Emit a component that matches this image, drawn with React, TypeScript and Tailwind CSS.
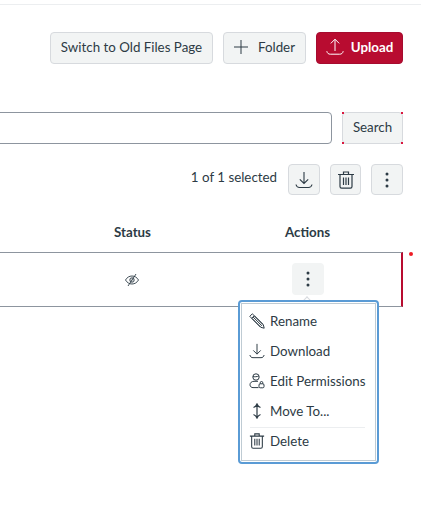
import React from "react";

const Download = ({ s = 18 }: { s?: number }) => (
  <svg width={s} height={s} viewBox="0 0 18 18" fill="none" stroke="currentColor" strokeWidth="1.1">
    <path d="M9 1v11.500M4.800 8.300 9 12.500l4.200-4.200" />
    <path d="M1 13.500c.5 2.200 1.800 3 3.500 3h9c1.700 0 3-.8 3.500-3" />
  </svg>
);
const Upload = () => (
  <svg width="18" height="18" viewBox="0 0 18 18" fill="none" stroke="currentColor" strokeWidth="1">
    <path d="M9 13V1.200M4.800 5.400 9 1.200l4.200 4.200" />
    <path d="M.8 13.200c.5 2.200 1.800 3 3.500 3h9.400c1.700 0 3-.8 3.500-3" />
  </svg>
);
const Trash = ({ s = 18 }: { s?: number }) => (
  <svg width={s} height={s} viewBox="0 0 18 18" fill="none" stroke="currentColor" strokeWidth="1.2">
    <path d="M1 3.500h16M6.500 3.500V1h5v2.500" />
    <path d="M3 3.500v12c0 1 .6 1.600 1.600 1.600h8.800c1 0 1.600-.6 1.600-1.600v-12" />
    <path d="M6.500 6.500v7.500M9 6.500v7.500M11.500 6.500v7.500" />
  </svg>
);
const Dots = () => (
  <svg width="4" height="16" viewBox="0 0 4 16" fill="currentColor">
    <circle cx="2" cy="2" r="1.500" />
    <circle cx="2" cy="8" r="1.500" />
    <circle cx="2" cy="14" r="1.500" />
  </svg>
);
const Plus = () => (
  <svg width="14" height="14" viewBox="0 0 14 14" fill="none" stroke="currentColor" strokeWidth="1">
    <path d="M7 0v14M0 7h14" />
  </svg>
);
const EyeOff = () => (
  <svg width="14" height="14" viewBox="0 0 14 14" fill="none" stroke="currentColor" strokeWidth="0.9">
    <path d="M.5 7C2 4.400 4.300 3 7 3s5 1.400 6.500 4C12 9.600 9.700 11 7 11S2 9.600.5 7Z" />
    <circle cx="7" cy="7" r="2.200" fill="currentColor" fillOpacity="0.15" />
    <path d="M3 13 11 1" />
  </svg>
);
const Pencil = () => (
  <svg width="16" height="16" viewBox="0 0 16 16" fill="none" stroke="currentColor" strokeWidth="1">
    <path d="M.8 3.300 3.300.8l11 10.900.9 3.500-3.500-.9L.8 3.300Z" />
    <path d="M2.800 5.300 5.300 2.800M4 3.900l9 9M3 5.500l8.500 8.500M5.500 3l8.500 8.500" />
  </svg>
);
const UserLock = () => (
  <svg width="16" height="16" viewBox="0 0 16 16" fill="none" stroke="currentColor" strokeWidth="1">
    <circle cx="7" cy="4" r="3.200" />
    <path d="M4 3.600c1.400.3 4 .2 5.800-.6" />
    <path d="M9 8.300H5C2.700 8.300 1 9.800 1 11.700c0 1.800 1.300 2.900 3 2.900h5.500" />
    <rect x="10" y="10.800" width="5" height="4" rx="1.200" />
    <path d="M11.200 10.800v-1a1.300 1.300 0 0 1 2.600 0v1" />
  </svg>
);
const Move = () => (
  <svg width="16" height="16" viewBox="0 0 16 16" fill="none" stroke="currentColor" strokeWidth="1.200">
    <path d="M8 1v14M4.500 4.500C6 4 7.300 2.800 8 1c.7 1.800 2 3 3.500 3.500M4.500 11.500c1.500.5 2.800 1.700 3.500 3.500.7-1.800 2-3 3.500-3.500" />
  </svg>
);

const btn =
  "flex items-center justify-center h-8 rounded-[4px] border border-[#d7dade] bg-[#f2f4f4] text-[#2d3b45]";

const MenuItem = ({ icon, label }: { icon: React.ReactNode; label: string }) => (
  <div className="flex items-center h-[30px] pl-[7px] gap-[5px] text-[#2d3b45]">
    <span className="w-[16px] flex justify-center">{icon}</span>
    <span>{label}</span>
  </div>
);

export default function App() {
  return (
    <div
      className="relative w-[421px] h-[506px] overflow-hidden bg-white text-[13.33px] leading-[20px] text-[#2d3b45]"
      style={{ fontFamily: "Lato, 'Liberation Sans', sans-serif" }}
    >
      <div className="mt-1 h-px bg-[#eceef0]" />

      <div className="mt-[27px] flex justify-end gap-[10px] pr-[18px]">
        <button className={`${btn} w-[163px] pb-[2px]`}>Switch to Old Files Page</button>
        <button className={`${btn} w-[83px] gap-[10px] pb-[2px]`}>
          <Plus />
          Folder
        </button>
        <button className="flex items-center justify-center gap-[7px] w-[87px] h-8 rounded-[4px] border border-[#a60b2f] bg-[#b80c30] text-white font-bold pb-[2px]">
          <Upload />
          Upload
        </button>
      </div>

      <div className="mt-[48px] flex gap-[10px] pr-[18px]">
        <div className="flex-1 h-8 -ml-2 rounded-[4px] border border-[#8d959f] bg-white" />
        <div className="relative">
          <button className={`${btn} w-[61px] pb-[2px]`}>Search</button>
          <span className="absolute left-0 top-0 w-[2px] h-[2px] bg-[#d9173f]" />
          <span className="absolute right-0 top-0 w-[2px] h-[2px] bg-[#d9173f]" />
          <span className="absolute left-0 bottom-0 w-[2px] h-[2px] bg-[#d9173f]" />
          <span className="absolute right-0 bottom-0 w-[2px] h-[2px] bg-[#d9173f]" />
        </div>
      </div>

      <div className="mt-5 flex items-center justify-end gap-[10px] pr-[18px]">
        <span className="mr-[1px] pb-[5px]">1 of 1 selected</span>
        <button className={`${btn} w-8 h-[31px]`}>
          <Download />
        </button>
        <button className={`${btn} w-[31px] h-[31px]`}>
          <Trash />
        </button>
        <button className={`${btn} w-8 h-[31px]`}>
          <Dots />
        </button>
      </div>

      <div className="mt-[27px] flex h-5 font-bold">
        <span className="ml-[114px]">Status</span>
        <span className="ml-[134px]">Actions</span>
      </div>

      <div className="relative mt-[10px] mr-[18px] h-[55px] border-y border-[#8d959f] border-r-[2px] border-r-[#b80c30] flex items-center">
        <span className="ml-[125px]">
          <EyeOff />
        </span>
        <span className="ml-[153px] flex items-center justify-center w-8 h-8 rounded-[4px] bg-[#f2f4f4] -mt-px">
          <Dots />
        </span>
      </div>

      <span className="absolute left-[409px] top-[252px] w-1 h-1 rounded-full bg-[#ee1c25]" />

      <div className="absolute left-[303px] top-[298px] w-2 h-2 rotate-45 bg-white border-l border-t border-[#d7dade]" />

      <div className="absolute left-[238px] top-[300px] w-[141px] h-[164px] rounded-[4px] border-2 border-[#5a9bd5] p-[1px] bg-white">
        <div className="h-full border border-[#bfcbd3] pt-[2px]">
          <MenuItem icon={<Pencil />} label="Rename" />
          <MenuItem icon={<Download s={16} />} label="Download" />
          <MenuItem icon={<UserLock />} label="Edit Permissions" />
          <MenuItem icon={<Move />} label="Move To..." />
          <div className="ml-[8px] mr-[10px] mt-px h-px bg-[#eceef0] -mb-[2px]" />
          <MenuItem icon={<Trash s={16} />} label="Delete" />
        </div>
      </div>
    </div>
  );
}
